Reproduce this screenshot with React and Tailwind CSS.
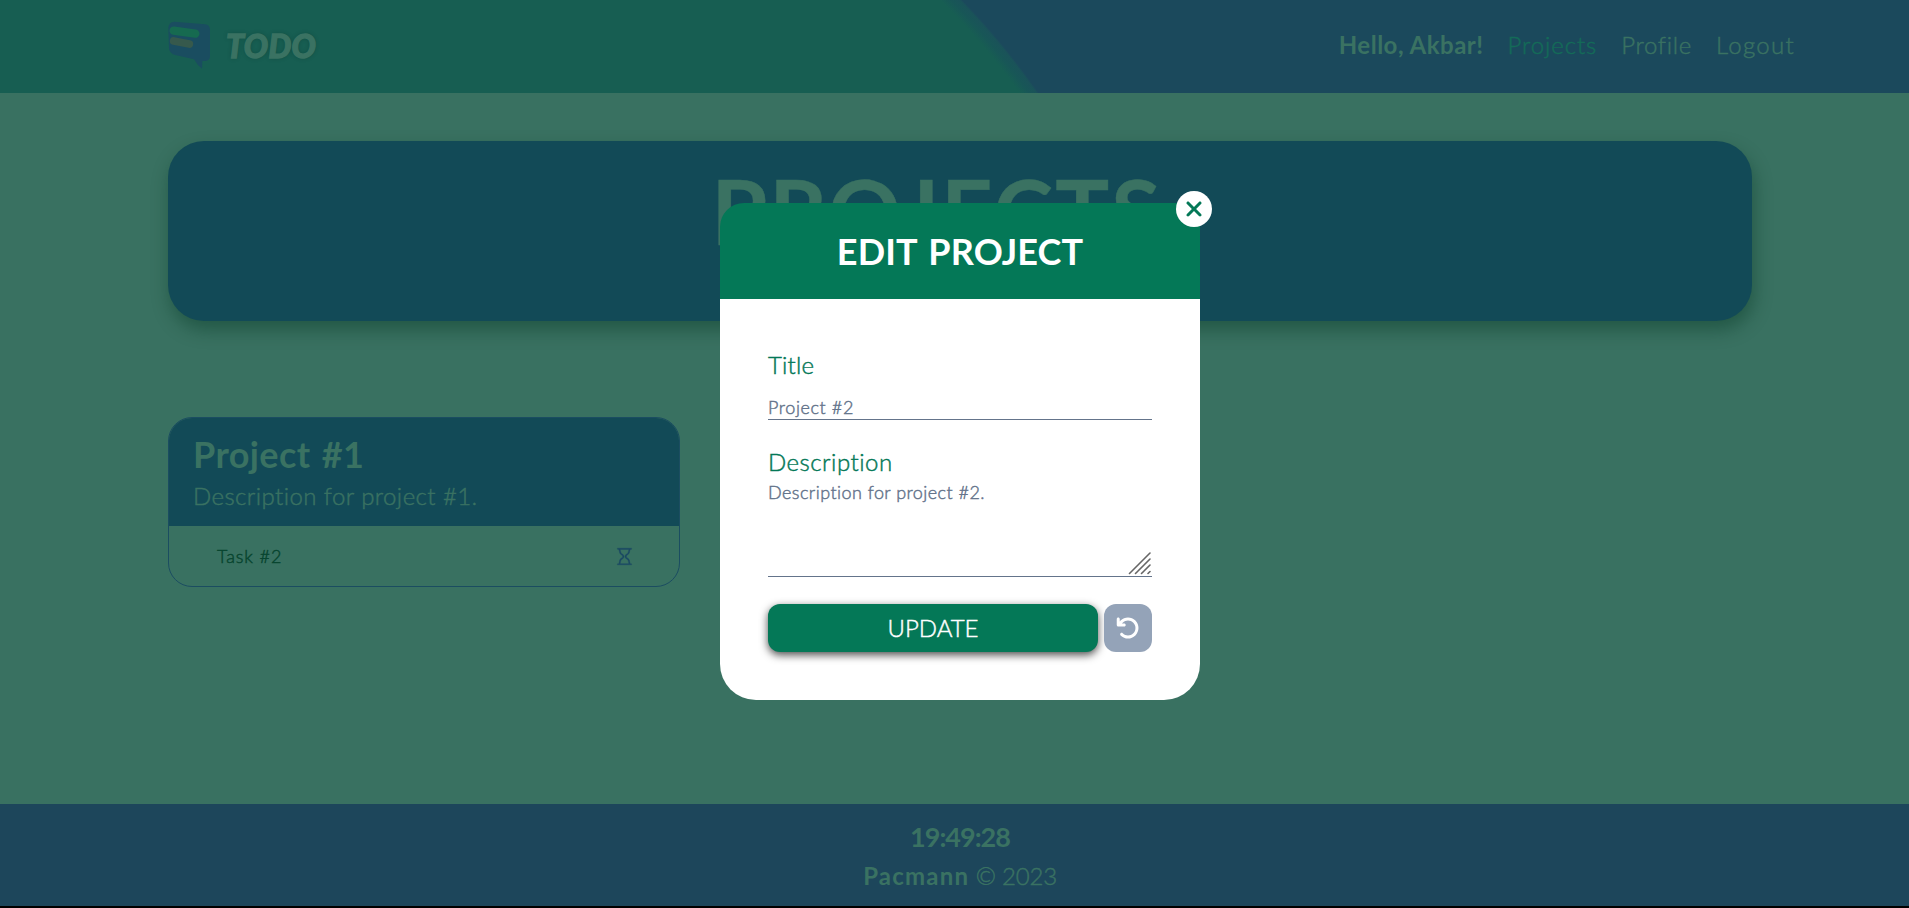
import { BsHourglass } from "react-icons/bs";
import { FaArrowRotateLeft, FaXmark } from "react-icons/fa6";

function Logo() {
  return (
    <div className="flex items-center">
      <svg className="h-[50px] w-[43px]" viewBox="84 60 129 150">
        <path
          d="M103 65 L195 73 Q210 75 210 90 L210 170 Q209 181 196 183 L187 183 L186 206 Q172 196 162 178 L106 165 Q90 161 87 146 L85 84 Q86 66 103 65Z"
          fill="#1a4d60"
        />
        <path d="M101 92 L166 101" stroke="#166a50" strokeWidth="25" strokeLinecap="round" />
        <path d="M101 123 L148 132" stroke="#36594c" strokeWidth="23" strokeLinecap="round" />
      </svg>
      <span className="ml-[15px] mt-[1px] text-[32px] font-black italic leading-none tracking-[0.4px] text-[#3a7262] [-webkit-text-stroke:1.4px_#3a7262] [text-shadow:0_0_4px_rgba(0,40,30,0.35)]">
        TODO
      </span>
    </div>
  );
}

function Header() {
  return (
    <header className="flex h-[93px] items-center justify-between bg-[radial-gradient(circle_at_448px_501px,#175e52_702px,#185657_710px,#1a5359_716px,#1b495c_718px)] pl-[168px] pr-[125px] pb-[3px]">
      <Logo />
      <nav className="flex gap-6 text-[#3a7262]">
        <span className="font-bold tracking-[0.5px] [-webkit-text-stroke:0px]">Hello, Akbar!</span>
        <a className="tracking-[0.9px] text-[#146b58]">Projects</a>
        <a className="tracking-[0.7px]">Profile</a>
        <a className="tracking-[1.3px]">Logout</a>
      </nav>
    </header>
  );
}

function ProjectCard() {
  return (
    <article className="mt-24 w-[512px] overflow-hidden rounded-3xl border border-[#1b4d61]">
      <div className="h-[108px] bg-[#124a57] px-6 py-3 text-[#3a7262]">
        <h2 className="text-[36px] font-bold leading-[48px] tracking-[0.4px] [-webkit-text-stroke:0px] [word-spacing:2px]">
          Project #1
        </h2>
        <p className="leading-9 tracking-[0.43px]">Description for project #1.</p>
      </div>
      <div className="flex h-[60px] items-center justify-between pl-12 pr-[45px] text-lg text-[#07452f]">
        <span className="tracking-[0.9px]">Task #2</span>
        <BsHourglass className="size-[19px] text-[#1b4965]" stroke="#1b4965" strokeWidth="0.3" />
      </div>
    </article>
  );
}

function EditModal() {
  return (
    <div className="absolute inset-0 flex items-start justify-center pt-[203px]">
      <section className="relative w-[480px]">
        <button className="absolute -right-3 -top-3 flex size-9 items-center justify-center rounded-full bg-white text-2xl text-[#047857]">
          <FaXmark />
        </button>
        <h2 className="h-24 rounded-tl-3xl bg-[#047857] text-center text-[36px] font-bold leading-[96px] tracking-[0.1px] text-white [-webkit-text-stroke:0px] [word-spacing:3px]">
          EDIT PROJECT
        </h2>
        <form className="flex flex-col rounded-b-[36px] bg-white p-12 text-[#047857]">
          <label className="leading-9 tracking-[0.2px]">Title</label>
          <div className="mt-3 h-[25px] border-b border-[#64748b] text-lg leading-6 tracking-[0.6px] text-[#64748b]">
            Project #2
          </div>
          <label className="mt-6 leading-9 tracking-[0.5px]">Description</label>
          <div className="relative h-[97px] border-b border-[#64748b] text-lg leading-6 tracking-[0.45px] text-[#64748b]">
            Description for project #2.
            <svg
              className="absolute bottom-0 right-0 size-6"
              viewBox="0 0 24 24"
              stroke="#666"
              strokeWidth="1.6"
              strokeLinecap="round"
            >
              <path d="M1.5 21.5 22 1M7.5 21.5 22 7M13.5 21.5 22 13M20 21.5 22 19.5" />
            </svg>
          </div>
          <div className="mt-[27px] flex gap-1.5">
            <button
              type="button"
              className="h-12 w-[330px] rounded-xl bg-[#047857] text-white shadow-[0_3px_8px_rgba(0,0,0,0.7)]"
            >
              UPDATE
            </button>
            <button
              type="button"
              className="flex size-12 items-center justify-center rounded-xl bg-[#94a3b8] text-white"
            >
              <FaArrowRotateLeft />
            </button>
          </div>
        </form>
      </section>
    </div>
  );
}

export default function App() {
  return (
    <div className="h-[908px] overflow-hidden bg-black">
      <div className="relative flex h-[906px] w-[1920px] flex-col bg-[#397161] font-['Lato',sans-serif] text-[24px] font-light leading-9 [-webkit-text-stroke:0.45px_currentColor]">
        <Header />
        <main className="h-[711px] px-[168px] pt-12">
          <h1 className="h-[180px] rounded-[36px] bg-[#124a57] pr-[46px] pt-6 text-center text-[90px] font-bold leading-[90px] tracking-[2.1px] text-[#3a7262] shadow-[2px_9px_18px_rgba(0,50,30,0.4)]">
            PROJECTS
          </h1>
          <ProjectCard />
        </main>
        <footer className="flex flex-1 flex-col items-center bg-[#1d465b] pt-[13px] leading-[39px] text-[#3a7262]">
          <div className="text-[27px] font-bold tracking-[-1px] [-webkit-text-stroke:0px]">19:49:28</div>
          <div>
            <span className="font-bold tracking-[1.2px] [-webkit-text-stroke:0px]">Pacmann</span>{" "}
            <span className="tracking-[-0.2px]">© 2023</span>
          </div>
        </footer>
        <EditModal />
      </div>
    </div>
  );
}
